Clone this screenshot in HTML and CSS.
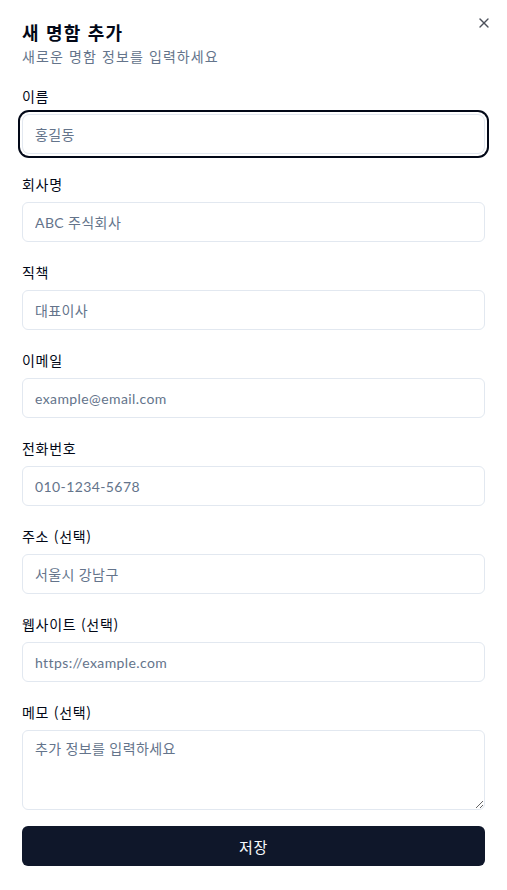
FILE: index.html
```html
<!DOCTYPE html>
<html lang="ko">
<head>
<meta charset="utf-8">
<title>새 명함 추가</title>
<link rel="stylesheet" href="styles.css">
</head>
<body>
<div class="dialog">
  <button class="close" type="button" aria-label="닫기">
    <svg viewBox="0 0 24 24" width="16" height="16" fill="none" stroke="currentColor" stroke-width="2" stroke-linecap="round" stroke-linejoin="round"><path d="M18 6 6 18"/><path d="m6 6 12 12"/></svg>
  </button>
  <div class="header">
    <h2 class="title">새 명함 추가</h2>
    <p class="desc">새로운 명함 정보를 입력하세요</p>
  </div>
  <form class="form">
    <div class="field">
      <label class="label" for="name">이름</label>
      <input class="input focused" id="name" placeholder="홍길동">
    </div>
    <div class="field">
      <label class="label" for="company">회사명</label>
      <input class="input" id="company" placeholder="ABC 주식회사">
    </div>
    <div class="field">
      <label class="label" for="position">직책</label>
      <input class="input" id="position" placeholder="대표이사">
    </div>
    <div class="field">
      <label class="label" for="email">이메일</label>
      <input class="input" id="email" placeholder="example@email.com">
    </div>
    <div class="field">
      <label class="label" for="phone">전화번호</label>
      <input class="input" id="phone" placeholder="010-1234-5678">
    </div>
    <div class="field">
      <label class="label" for="address">주소 (선택)</label>
      <input class="input" id="address" placeholder="서울시 강남구">
    </div>
    <div class="field">
      <label class="label" for="website">웹사이트 (선택)</label>
      <input class="input" id="website" placeholder="https://example.com">
    </div>
    <div class="field">
      <label class="label" for="memo">메모 (선택)</label>
      <textarea class="input textarea" id="memo" placeholder="추가 정보를 입력하세요"></textarea>
    </div>
    <button class="submit" type="button">저장</button>
  </form>
</div>
</body>
</html>
```
FILE: styles.css
```css
* { box-sizing: border-box; }
html, body { margin: 0; padding: 0; background: #ffffff; }
body {
  font-family: "Lato", "Noto Sans CJK KR", sans-serif;
  color: #020817;
}
.dialog {
  position: relative;
  padding: 23px 22px 24px 22px;
  min-height: 890px;
}
.close {
  position: absolute;
  top: 15px;
  right: 15px;
  width: 16px;
  height: 16px;
  padding: 0;
  border: 0;
  background: none;
  color: #020817;
  opacity: 0.7;
  display: flex;
}
.header { display: flex; flex-direction: column; gap: 5px; }
.title {
  margin: 0;
  font-size: 18px;
  line-height: 18px;
  font-weight: 700;
  letter-spacing: 1.2px;
  font-family: "Noto Sans CJK KR", sans-serif;
}
.desc {
  margin: 0;
  font-size: 14px;
  line-height: 20px;
  color: #64748b;
  letter-spacing: 1.1px;
  font-family: "Noto Sans CJK KR", sans-serif;
}
.form {
  margin-top: 20px;
  display: flex;
  flex-direction: column;
  gap: 20px;
}
.field { display: flex; flex-direction: column; gap: 8px; }
.label {
  font-size: 14px;
  line-height: 20px;
  font-weight: 400;
  letter-spacing: 0.7px;
  font-family: "Noto Sans CJK KR", sans-serif;
  color: #020817;
}
.input {
  height: 40px;
  width: 100%;
  border: 1px solid #e2e8f0;
  border-radius: 6px;
  padding: 0 12px;
  font-size: 14px;
  letter-spacing: 0.4px;
  font-family: "Lato", "Noto Sans CJK KR", sans-serif;
  color: #020817;
  background: #ffffff;
  outline: none;
}
.input::placeholder { color: #64748b; opacity: 1; }
.focused {
  box-shadow: 0 0 0 2px #ffffff, 0 0 0 4px #020817;
  border-radius: 7px;
}
.textarea {
  height: 80px;
  padding: 8px 12px;
  line-height: 20px;
  resize: vertical;
  display: block;
}
.submit {
  margin-top: -4px;
  height: 40px;
  width: 100%;
  border: 0;
  border-radius: 6px;
  background: #0f172a;
  color: #f8fafc;
  font-size: 15px;
  font-weight: 400;
  letter-spacing: 0.6px;
  font-family: "Noto Sans CJK KR", sans-serif;
}
```
